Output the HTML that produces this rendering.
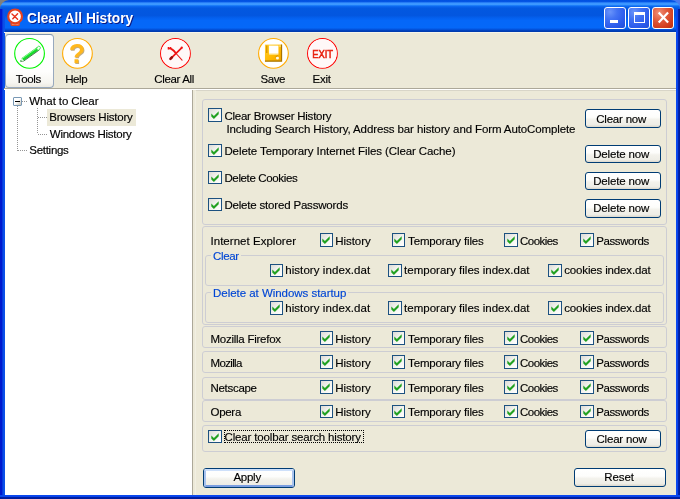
<!DOCTYPE html>
<html><head><meta charset="utf-8"><title>Clear All History</title>
<style>
html,body{margin:0;padding:0}
body{width:680px;height:499px;overflow:hidden;position:relative;background:#ECE9D8;font-family:"Liberation Sans",sans-serif;font-size:11.5px;color:#000}
div,span,svg{position:absolute;box-sizing:border-box}
.t{white-space:pre;line-height:13px;height:13px;-webkit-text-stroke:0.15px currentColor}
.title{left:0;top:0;width:680px;height:32px;border-radius:9px 9px 0 0;background:linear-gradient(to bottom,#0050E0 0%,#0656E6 6%,#3A94FF 9%,#3D98FF 14%,#1C7EFA 17%,#0862EC 21%,#0358E0 27%,#0356DF 48%,#0460EE 56%,#0567F8 64%,#0568F8 86%,#0458E4 91%,#0042C0 95%,#0038A8 100%)}
.bl{left:0;top:9px;width:5px;height:490px;background:linear-gradient(to right,#0019CF 0,#0019CF 2px,#0A4CE6 2.8px,#0B52EA 5px)}
.br{left:676px;top:9px;width:4px;height:490px;background:linear-gradient(to right,#0B4AF0 0,#0A44EA 1.8px,#001FA4 2.6px,#001A98 4px)}
.bb{left:0;top:495px;width:680px;height:4px;background:linear-gradient(to bottom,#0B4AF0 0,#0A44EA 1.6px,#0020A8 2.3px,#001A98 4px)}
.ttext{left:27.2px;top:8px;font-family:"Liberation Sans",sans-serif;font-weight:bold;font-size:14.5px;line-height:20px;color:#fff;text-shadow:1px 1px 0 #0A1883;white-space:pre;transform-origin:0 0;transform:scaleX(0.945)}
.wb{top:7px;width:21.5px;height:22px;border:1px solid #fff;border-radius:3px;background:radial-gradient(circle at 25% 20%,#6A94FA 0,#4373F3 32%,#2C5CEC 68%,#1F4ED8 100%)}
.wbx{background:radial-gradient(circle at 30% 25%,#F09078 0,#E0583A 40%,#D23C1C 75%,#B8300F 100%)}
.cb{width:13.5px;height:13.5px;border:1.1px solid #1C5180;background:linear-gradient(135deg,#DCDCD7 0%,#F3F3EF 50%,#FFFFFF 100%)}
.gb{border:1px solid #CDCDD3;border-radius:3px;}
.btn{border:1px solid #003C74;border-radius:3px;background:linear-gradient(to bottom,#FFFFFF 0%,#FDFDFB 42%,#F3F2EC 56%,#EEEDE6 86%,#DAD6CB 100%)}
.btn .t{left:0;width:100%;text-align:center}
.lg{color:#0046D5;background:#ECE9D8;padding:0 2px}
.dot{background-image:linear-gradient(to right,#959595 50%,transparent 50%);background-size:2px 1px}
.dotv{background-image:linear-gradient(to bottom,#959595 50%,transparent 50%);background-size:1px 2px}
#w{left:0;top:0;width:680px;height:499px;will-change:transform}
</style></head><body><div id="w">

<div style="left:0;top:0;width:10px;height:10px;background:#807F7C"></div><div style="left:670px;top:0;width:10px;height:10px;background:#4C7AF0"></div>
<div class="title"></div>
<div class="bl"></div><div class="br"></div><div class="bb"></div>
<svg style="left:6px;top:8px" width="18" height="20" viewBox="0 0 18 20">
<rect x="4.4" y="14.2" width="9.6" height="3.8" rx="1.4" fill="#E54A26"/>
<rect x="5.8" y="15.3" width="6.8" height="1.3" rx="0.6" fill="#F6B8A6"/>
<circle cx="9.1" cy="8.4" r="6.9" fill="#FFFFFF" stroke="#E5421F" stroke-width="2.2"/>
<path d="M6 6 L11.6 11.2 M11.6 5.8 L6.8 10.8" stroke="#E8301A" stroke-width="1.4" stroke-linecap="round" fill="none"/>
</svg>
<span class="ttext">Clear All History</span>
<div class="wb" style="left:604px"><div style="left:5px;top:12px;width:7.5px;height:3px;background:#fff"></div></div>
<div class="wb" style="left:628px"><div style="left:5.2px;top:3.9px;width:11.3px;height:11px;border:1.3px solid #fff;border-top-width:3px"></div></div>
<div class="wb wbx" style="left:652.2px"><svg style="left:0;top:0" width="20" height="20" viewBox="0 0 20 20"><path d="M5.7 4.6 L15.1 14.6 M15.1 4.6 L5.7 14.6" stroke="#fff" stroke-width="2.2" stroke-linecap="butt"/></svg></div>
<div style="left:4px;top:32px;width:672px;height:1px;background:#F6F4EA"></div>
<div style="left:4px;top:88px;width:672px;height:1px;background:#ACA899"></div>
<div style="left:4px;top:89px;width:672px;height:1px;background:#FFFFFF"></div>
<div style="left:5px;top:34px;width:49px;height:54px;border:1px solid #98A9BE;border-top-color:#7F95AE;border-radius:4px;background:linear-gradient(to bottom,#FFFFFF 0%,#FEFEFD 70%,#F6F5F0 92%,#ECEAE2 100%)"></div>
<svg style="left:12px;top:36px" width="36" height="34" viewBox="0 0 36 34"><g transform="translate(0.55 0)"><circle cx="17" cy="17.4" r="14.85" fill="#fff" stroke="#00F400" stroke-width="1.1"/>
<path d="M9.8 23.6 L25.6 12.4" stroke="#18DC2C" stroke-width="3.2" stroke-linecap="butt" fill="none"/>
<path d="M9.4 22.6 L25 11.5" stroke="#86FF8E" stroke-width="1" fill="none"/>
<path d="M8.2 25.5 L11.4 24.9 L26.8 13.9" stroke="#1E5A24" stroke-width="1" fill="none" opacity="0.8"/>
<path d="M7.3 25.6 L9.2 22.2 L11.6 25 Z" fill="#D4FFD6"/>
<path d="M7.3 25.6 L8.3 23.9 L9.4 25.2 Z" fill="#1A7A26"/>
<ellipse cx="26" cy="12.2" rx="1.6" ry="2.1" transform="rotate(35 26 12.2)" fill="#F6FFF6" stroke="#30E040" stroke-width="0.8"/>
</g></svg>
<svg style="left:60px;top:36px" width="36" height="34" viewBox="0 0 36 34"><g transform="translate(0.45 0)"><circle cx="17" cy="17.4" r="14.85" fill="#fff" stroke="#FFAA00" stroke-width="1.1"/>
<text x="17.3" y="27.6" text-anchor="middle" font-family="Liberation Sans, sans-serif" font-weight="bold" font-size="27" fill="#8A5A00" opacity="0.5">?</text>
<text x="16.6" y="27" text-anchor="middle" font-family="Liberation Sans, sans-serif" font-weight="bold" font-size="27" fill="#FFB81E">?</text>
</g></svg>
<svg style="left:158px;top:36px" width="36" height="34" viewBox="0 0 36 34"><g transform="translate(0.45 0)"><circle cx="17" cy="17.4" r="14.85" fill="#fff" stroke="#FF0000" stroke-width="1.1"/>
<circle cx="17" cy="17.4" r="14.2" fill="#FFF8F8"/>
<path d="M10.4 12.2 C13.6 12.4 15.4 14.4 17.2 17" stroke="#F01414" stroke-width="1.9" fill="none" stroke-linecap="round"/>
<path d="M17.2 17 L23.6 24.2" stroke="#E82020" stroke-width="1.1" fill="none" stroke-linecap="round"/>
<path d="M9.9 11 L9.9 13.4 M12.2 10.9 L12.2 12.6" stroke="#F01414" stroke-width="1.3" fill="none"/>
<path d="M23.2 11.8 L13 21.8" stroke="#F01414" stroke-width="1.7" fill="none" stroke-linecap="round"/>
<path d="M13.4 21.4 L12 22.8" stroke="#9A0A0A" stroke-width="2.6" fill="none" stroke-linecap="round"/>
<circle cx="23.3" cy="11.7" r="1.1" fill="#F01414"/>
</g></svg>
<svg style="left:256px;top:36px" width="36" height="34" viewBox="0 0 36 34"><g transform="translate(0.45 0)"><circle cx="17" cy="17.4" r="14.85" fill="#fff" stroke="#FFAA00" stroke-width="1.1"/>
<defs><linearGradient id="fg" x1="0" y1="0" x2="1" y2="1"><stop offset="0" stop-color="#FFD030"/><stop offset="0.6" stop-color="#FFB800"/><stop offset="1" stop-color="#F0A000"/></linearGradient></defs>
<rect x="8.5" y="8.6" width="16.6" height="16.6" fill="url(#fg)"/>
<path d="M8.5 25.2 H25.1 V8.6" stroke="#A87400" stroke-width="1.2" fill="none"/>
<path d="M10.3 9.4 V17" stroke="#D89400" stroke-width="1.4"/>
<rect x="12.6" y="9.6" width="9.4" height="8.2" fill="#FFFFFF"/>
<path d="M12.6 18.3 H22" stroke="#FFE58A" stroke-width="1"/>
<circle cx="21" cy="22" r="1.5" fill="#FFFBEA"/>
<path d="M19.2 21.2 A2 2 0 0 1 21.6 19.9" stroke="#C88C00" stroke-width="0.9" fill="none"/>
<rect x="22.9" y="9.4" width="1.3" height="1.3" fill="#FFE9A0"/>
</g></svg>
<svg style="left:305px;top:36px" width="36" height="34" viewBox="0 0 36 34"><g transform="translate(0.45 0)"><circle cx="17" cy="17.4" r="14.85" fill="#fff" stroke="#FF0000" stroke-width="1.1"/>
<circle cx="17" cy="17.4" r="14.2" fill="#FFF8F8"/>
<text x="17.2" y="22" text-anchor="middle" font-family="Liberation Sans, sans-serif" font-size="11" fill="#E8200E" stroke="#E8200E" stroke-width="0.55" textLength="21" lengthAdjust="spacingAndGlyphs">EXIT</text>
</g></svg>
<span class="t" style="left:15.8px;top:72.7px;letter-spacing:-0.352px;">Tools</span>
<span class="t" style="left:65.2px;top:72.7px;letter-spacing:-0.439px;">Help</span>
<span class="t" style="left:154.3px;top:72.7px;letter-spacing:-0.359px;">Clear All</span>
<span class="t" style="left:260.4px;top:72.7px;letter-spacing:-0.405px;">Save</span>
<span class="t" style="left:312.5px;top:72.7px;letter-spacing:-0.243px;">Exit</span>
<div style="left:5px;top:90px;width:188px;height:405px;background:#fff;border-right:1px solid #ACA899"></div>
<div style="left:196px;top:90px;width:480px;height:1px;background:#D8D5C8"></div>
<div style="left:195px;top:91px;width:1px;height:404px;background:#F1EFE3"></div>
<div class="dotv" style="left:17px;top:106px;width:1px;height:45px"></div>
<div class="dot" style="left:18px;top:150px;width:9px;height:1px"></div>
<div class="dot" style="left:22px;top:101px;width:6px;height:1px"></div>
<div class="dotv" style="left:37px;top:108px;width:1px;height:26px"></div>
<div class="dot" style="left:38px;top:117px;width:9px;height:1px"></div>
<div class="dot" style="left:38px;top:134px;width:9px;height:1px"></div>
<div style="left:13px;top:97px;width:9px;height:9px;border:1px solid #7898B5;border-radius:1px;background:linear-gradient(135deg,#fff 0%,#fff 45%,#C7C2B4 100%)"><div style="left:1px;top:3px;width:5px;height:1px;background:#000"></div></div>
<div style="left:47px;top:109px;width:89px;height:17px;background:#ECE9D8"></div>
<span class="t " style="left:29.3px;top:94.6px;letter-spacing:-0.093px;">What to Clear</span>
<span class="t " style="left:49.2px;top:111.0px;letter-spacing:-0.219px;">Browsers History</span>
<span class="t " style="left:49.8px;top:127.6px;letter-spacing:-0.263px;">Windows History</span>
<span class="t " style="left:29.3px;top:144.1px;letter-spacing:-0.283px;">Settings</span>
<div class="gb" style="left:202px;top:99.00px;width:465px;height:126.00px;"></div>
<div class="cb" style="left:208px;top:108px;width:14px;height:14px"><svg style="left:1.85px;top:2.05px" width="9" height="9" viewBox="0 0 9 9"><path d="M0.3 2.4 L0.3 5.4 L2.9 8 L7.7 3.2 L7.7 0.2 L2.9 5 Z" fill="#21A121"/></svg></div>
<span class="t " style="left:224.4px;top:110.1px;letter-spacing:-0.230px;">Clear Browser History</span>
<span class="t " style="left:226.4px;top:123.2px;letter-spacing:-0.111px;">Including Search History, Address bar history and Form AutoComplete</span>
<div class="cb" style="left:208px;top:144px;width:14px;height:13px"><svg style="left:1.85px;top:1.55px" width="9" height="9" viewBox="0 0 9 9"><path d="M0.3 2.4 L0.3 5.4 L2.9 8 L7.7 3.2 L7.7 0.2 L2.9 5 Z" fill="#21A121"/></svg></div>
<span class="t " style="left:224.4px;top:145.1px;letter-spacing:-0.089px;">Delete Temporary Internet Files (Clear Cache)</span>
<div class="cb" style="left:208px;top:171px;width:14px;height:13px"><svg style="left:1.85px;top:1.55px" width="9" height="9" viewBox="0 0 9 9"><path d="M0.3 2.4 L0.3 5.4 L2.9 8 L7.7 3.2 L7.7 0.2 L2.9 5 Z" fill="#21A121"/></svg></div>
<span class="t " style="left:224.4px;top:172.1px;letter-spacing:-0.356px;">Delete Cookies</span>
<div class="cb" style="left:208px;top:198px;width:14px;height:13px"><svg style="left:1.85px;top:1.55px" width="9" height="9" viewBox="0 0 9 9"><path d="M0.3 2.4 L0.3 5.4 L2.9 8 L7.7 3.2 L7.7 0.2 L2.9 5 Z" fill="#21A121"/></svg></div>
<span class="t " style="left:224.4px;top:199.1px;letter-spacing:-0.185px;">Delete stored Passwords</span>
<div class="btn" style="left:585px;top:109px;width:76px;height:19px"></div>
<span class="t" style="left:596.2px;top:112.9px;letter-spacing:-0.198px;">Clear now</span>
<div class="btn" style="left:585px;top:145px;width:76px;height:18px"></div>
<span class="t" style="left:593.2px;top:147.9px;letter-spacing:-0.155px;">Delete now</span>
<div class="btn" style="left:585px;top:172px;width:76px;height:18px"></div>
<span class="t" style="left:593.2px;top:175.0px;letter-spacing:-0.155px;">Delete now</span>
<div class="btn" style="left:585px;top:199px;width:76px;height:18.5px"></div>
<span class="t" style="left:593.2px;top:202.1px;letter-spacing:-0.155px;">Delete now</span>
<div class="gb" style="left:202px;top:226.00px;width:465px;height:98.90px;"></div>
<span class="t " style="left:210.5px;top:235.0px;letter-spacing:0.028px;">Internet Explorer</span>
<div class="cb" style="left:320px;top:233px;width:13px;height:14px"><svg style="left:1.35px;top:2.05px" width="9" height="9" viewBox="0 0 9 9"><path d="M0.3 2.4 L0.3 5.4 L2.9 8 L7.7 3.2 L7.7 0.2 L2.9 5 Z" fill="#21A121"/></svg></div>
<span class="t " style="left:335.2px;top:235.0px;letter-spacing:-0.040px;">History</span>
<div class="cb" style="left:392px;top:233px;width:13px;height:14px"><svg style="left:1.35px;top:2.05px" width="9" height="9" viewBox="0 0 9 9"><path d="M0.3 2.4 L0.3 5.4 L2.9 8 L7.7 3.2 L7.7 0.2 L2.9 5 Z" fill="#21A121"/></svg></div>
<span class="t " style="left:408.1px;top:235.0px;letter-spacing:-0.165px;">Temporary files</span>
<div class="cb" style="left:504px;top:233px;width:14px;height:14px"><svg style="left:1.85px;top:2.05px" width="9" height="9" viewBox="0 0 9 9"><path d="M0.3 2.4 L0.3 5.4 L2.9 8 L7.7 3.2 L7.7 0.2 L2.9 5 Z" fill="#21A121"/></svg></div>
<span class="t " style="left:520.1px;top:235.0px;letter-spacing:-0.566px;">Cookies</span>
<div class="cb" style="left:580px;top:233px;width:14px;height:14px"><svg style="left:1.85px;top:2.05px" width="9" height="9" viewBox="0 0 9 9"><path d="M0.3 2.4 L0.3 5.4 L2.9 8 L7.7 3.2 L7.7 0.2 L2.9 5 Z" fill="#21A121"/></svg></div>
<span class="t " style="left:596.3px;top:235.0px;letter-spacing:-0.417px;">Passwords</span>
<div class="gb" style="left:205px;top:255.10px;width:459px;height:31.00px;"></div>
<span class="t lg" style="left:211.1px;top:249.9px;letter-spacing:-0.397px;">Clear</span>
<div class="cb" style="left:270px;top:264px;width:13px;height:13px"><svg style="left:1.35px;top:1.55px" width="9" height="9" viewBox="0 0 9 9"><path d="M0.3 2.4 L0.3 5.4 L2.9 8 L7.7 3.2 L7.7 0.2 L2.9 5 Z" fill="#21A121"/></svg></div>
<span class="t " style="left:285.2px;top:264.3px;letter-spacing:0.074px;">history index.dat</span>
<div class="cb" style="left:388px;top:264px;width:14px;height:13px"><svg style="left:1.85px;top:1.55px" width="9" height="9" viewBox="0 0 9 9"><path d="M0.3 2.4 L0.3 5.4 L2.9 8 L7.7 3.2 L7.7 0.2 L2.9 5 Z" fill="#21A121"/></svg></div>
<span class="t " style="left:404.1px;top:264.3px;letter-spacing:0.004px;">temporary files index.dat</span>
<div class="cb" style="left:548px;top:264px;width:14px;height:13px"><svg style="left:1.85px;top:1.55px" width="9" height="9" viewBox="0 0 9 9"><path d="M0.3 2.4 L0.3 5.4 L2.9 8 L7.7 3.2 L7.7 0.2 L2.9 5 Z" fill="#21A121"/></svg></div>
<span class="t " style="left:564.2px;top:264.3px;letter-spacing:-0.146px;">cookies index.dat</span>
<div class="gb" style="left:205px;top:292.00px;width:459px;height:30.90px;"></div>
<span class="t lg" style="left:211.1px;top:286.7px;letter-spacing:-0.041px;">Delete at Windows startup</span>
<div class="cb" style="left:270px;top:301px;width:13px;height:14px"><svg style="left:1.35px;top:2.05px" width="9" height="9" viewBox="0 0 9 9"><path d="M0.3 2.4 L0.3 5.4 L2.9 8 L7.7 3.2 L7.7 0.2 L2.9 5 Z" fill="#21A121"/></svg></div>
<span class="t " style="left:285.2px;top:301.9px;letter-spacing:0.074px;">history index.dat</span>
<div class="cb" style="left:388px;top:301px;width:14px;height:14px"><svg style="left:1.85px;top:2.05px" width="9" height="9" viewBox="0 0 9 9"><path d="M0.3 2.4 L0.3 5.4 L2.9 8 L7.7 3.2 L7.7 0.2 L2.9 5 Z" fill="#21A121"/></svg></div>
<span class="t " style="left:404.1px;top:301.9px;letter-spacing:0.004px;">temporary files index.dat</span>
<div class="cb" style="left:548px;top:301px;width:14px;height:14px"><svg style="left:1.85px;top:2.05px" width="9" height="9" viewBox="0 0 9 9"><path d="M0.3 2.4 L0.3 5.4 L2.9 8 L7.7 3.2 L7.7 0.2 L2.9 5 Z" fill="#21A121"/></svg></div>
<span class="t " style="left:564.2px;top:301.9px;letter-spacing:-0.146px;">cookies index.dat</span>
<div class="gb" style="left:202px;top:326.10px;width:465px;height:22.40px;"></div>
<span class="t " style="left:210.5px;top:332.7px;letter-spacing:-0.256px;">Mozilla Firefox</span>
<div class="cb" style="left:320px;top:331px;width:13px;height:14px"><svg style="left:1.35px;top:2.05px" width="9" height="9" viewBox="0 0 9 9"><path d="M0.3 2.4 L0.3 5.4 L2.9 8 L7.7 3.2 L7.7 0.2 L2.9 5 Z" fill="#21A121"/></svg></div>
<span class="t " style="left:335.2px;top:332.7px;letter-spacing:-0.040px;">History</span>
<div class="cb" style="left:392px;top:331px;width:13px;height:14px"><svg style="left:1.35px;top:2.05px" width="9" height="9" viewBox="0 0 9 9"><path d="M0.3 2.4 L0.3 5.4 L2.9 8 L7.7 3.2 L7.7 0.2 L2.9 5 Z" fill="#21A121"/></svg></div>
<span class="t " style="left:408.1px;top:332.7px;letter-spacing:-0.165px;">Temporary files</span>
<div class="cb" style="left:504px;top:331px;width:14px;height:14px"><svg style="left:1.85px;top:2.05px" width="9" height="9" viewBox="0 0 9 9"><path d="M0.3 2.4 L0.3 5.4 L2.9 8 L7.7 3.2 L7.7 0.2 L2.9 5 Z" fill="#21A121"/></svg></div>
<span class="t " style="left:520.1px;top:332.7px;letter-spacing:-0.566px;">Cookies</span>
<div class="cb" style="left:580px;top:331px;width:14px;height:14px"><svg style="left:1.85px;top:2.05px" width="9" height="9" viewBox="0 0 9 9"><path d="M0.3 2.4 L0.3 5.4 L2.9 8 L7.7 3.2 L7.7 0.2 L2.9 5 Z" fill="#21A121"/></svg></div>
<span class="t " style="left:596.3px;top:332.7px;letter-spacing:-0.417px;">Passwords</span>
<div class="gb" style="left:202px;top:351.10px;width:465px;height:22.40px;"></div>
<span class="t " style="left:210.5px;top:356.7px;letter-spacing:-0.657px;">Mozilla</span>
<div class="cb" style="left:320px;top:355px;width:13px;height:14px"><svg style="left:1.35px;top:2.05px" width="9" height="9" viewBox="0 0 9 9"><path d="M0.3 2.4 L0.3 5.4 L2.9 8 L7.7 3.2 L7.7 0.2 L2.9 5 Z" fill="#21A121"/></svg></div>
<span class="t " style="left:335.2px;top:356.7px;letter-spacing:-0.040px;">History</span>
<div class="cb" style="left:392px;top:355px;width:13px;height:14px"><svg style="left:1.35px;top:2.05px" width="9" height="9" viewBox="0 0 9 9"><path d="M0.3 2.4 L0.3 5.4 L2.9 8 L7.7 3.2 L7.7 0.2 L2.9 5 Z" fill="#21A121"/></svg></div>
<span class="t " style="left:408.1px;top:356.7px;letter-spacing:-0.165px;">Temporary files</span>
<div class="cb" style="left:504px;top:355px;width:14px;height:14px"><svg style="left:1.85px;top:2.05px" width="9" height="9" viewBox="0 0 9 9"><path d="M0.3 2.4 L0.3 5.4 L2.9 8 L7.7 3.2 L7.7 0.2 L2.9 5 Z" fill="#21A121"/></svg></div>
<span class="t " style="left:520.1px;top:356.7px;letter-spacing:-0.566px;">Cookies</span>
<div class="cb" style="left:580px;top:355px;width:14px;height:14px"><svg style="left:1.85px;top:2.05px" width="9" height="9" viewBox="0 0 9 9"><path d="M0.3 2.4 L0.3 5.4 L2.9 8 L7.7 3.2 L7.7 0.2 L2.9 5 Z" fill="#21A121"/></svg></div>
<span class="t " style="left:596.3px;top:356.7px;letter-spacing:-0.417px;">Passwords</span>
<div class="gb" style="left:202px;top:377.10px;width:465px;height:22.60px;"></div>
<span class="t " style="left:210.5px;top:381.6px;letter-spacing:-0.299px;">Netscape</span>
<div class="cb" style="left:320px;top:380px;width:13px;height:14px"><svg style="left:1.35px;top:2.05px" width="9" height="9" viewBox="0 0 9 9"><path d="M0.3 2.4 L0.3 5.4 L2.9 8 L7.7 3.2 L7.7 0.2 L2.9 5 Z" fill="#21A121"/></svg></div>
<span class="t " style="left:335.2px;top:381.6px;letter-spacing:-0.040px;">History</span>
<div class="cb" style="left:392px;top:380px;width:13px;height:14px"><svg style="left:1.35px;top:2.05px" width="9" height="9" viewBox="0 0 9 9"><path d="M0.3 2.4 L0.3 5.4 L2.9 8 L7.7 3.2 L7.7 0.2 L2.9 5 Z" fill="#21A121"/></svg></div>
<span class="t " style="left:408.1px;top:381.6px;letter-spacing:-0.165px;">Temporary files</span>
<div class="cb" style="left:504px;top:380px;width:14px;height:14px"><svg style="left:1.85px;top:2.05px" width="9" height="9" viewBox="0 0 9 9"><path d="M0.3 2.4 L0.3 5.4 L2.9 8 L7.7 3.2 L7.7 0.2 L2.9 5 Z" fill="#21A121"/></svg></div>
<span class="t " style="left:520.1px;top:381.6px;letter-spacing:-0.566px;">Cookies</span>
<div class="cb" style="left:580px;top:380px;width:14px;height:14px"><svg style="left:1.85px;top:2.05px" width="9" height="9" viewBox="0 0 9 9"><path d="M0.3 2.4 L0.3 5.4 L2.9 8 L7.7 3.2 L7.7 0.2 L2.9 5 Z" fill="#21A121"/></svg></div>
<span class="t " style="left:596.3px;top:381.6px;letter-spacing:-0.417px;">Passwords</span>
<div class="gb" style="left:202px;top:400.40px;width:465px;height:21.90px;"></div>
<span class="t " style="left:210.5px;top:405.7px;letter-spacing:-0.294px;">Opera</span>
<div class="cb" style="left:320px;top:405px;width:13px;height:13px"><svg style="left:1.35px;top:1.55px" width="9" height="9" viewBox="0 0 9 9"><path d="M0.3 2.4 L0.3 5.4 L2.9 8 L7.7 3.2 L7.7 0.2 L2.9 5 Z" fill="#21A121"/></svg></div>
<span class="t " style="left:335.2px;top:405.7px;letter-spacing:-0.040px;">History</span>
<div class="cb" style="left:392px;top:405px;width:13px;height:13px"><svg style="left:1.35px;top:1.55px" width="9" height="9" viewBox="0 0 9 9"><path d="M0.3 2.4 L0.3 5.4 L2.9 8 L7.7 3.2 L7.7 0.2 L2.9 5 Z" fill="#21A121"/></svg></div>
<span class="t " style="left:408.1px;top:405.7px;letter-spacing:-0.165px;">Temporary files</span>
<div class="cb" style="left:504px;top:405px;width:14px;height:13px"><svg style="left:1.85px;top:1.55px" width="9" height="9" viewBox="0 0 9 9"><path d="M0.3 2.4 L0.3 5.4 L2.9 8 L7.7 3.2 L7.7 0.2 L2.9 5 Z" fill="#21A121"/></svg></div>
<span class="t " style="left:520.1px;top:405.7px;letter-spacing:-0.566px;">Cookies</span>
<div class="cb" style="left:580px;top:405px;width:14px;height:13px"><svg style="left:1.85px;top:1.55px" width="9" height="9" viewBox="0 0 9 9"><path d="M0.3 2.4 L0.3 5.4 L2.9 8 L7.7 3.2 L7.7 0.2 L2.9 5 Z" fill="#21A121"/></svg></div>
<span class="t " style="left:596.3px;top:405.7px;letter-spacing:-0.417px;">Passwords</span>
<div class="gb" style="left:202px;top:424.50px;width:465px;height:27.80px;"></div>
<div class="cb" style="left:208px;top:430px;width:14px;height:13px"><svg style="left:1.85px;top:1.55px" width="9" height="9" viewBox="0 0 9 9"><path d="M0.3 2.4 L0.3 5.4 L2.9 8 L7.7 3.2 L7.7 0.2 L2.9 5 Z" fill="#21A121"/></svg></div>
<span class="t " style="left:224.5px;top:431.2px;letter-spacing:-0.154px;">Clear toolbar search history</span>
<div style="left:223.5px;top:429.8px;width:140px;height:13.4px;border:1px dotted #000"></div>
<div class="btn" style="left:585px;top:430px;width:76px;height:18px"></div>
<span class="t" style="left:596.5px;top:433.1px;letter-spacing:-0.198px;">Clear now</span>
<div class="btn" style="left:203px;top:468px;width:92px;height:19.5px"><div style="left:0;top:0;width:90px;height:17.5px;border:2px solid #A9C3EE;border-top-color:#CEE0FA;border-bottom-color:#7B9EE0;border-radius:2px"></div></div>
<span class="t" style="left:233.4px;top:471.3px;letter-spacing:-0.256px;">Apply</span>
<div class="btn" style="left:574px;top:468px;width:92px;height:19px"></div>
<span class="t" style="left:604.2px;top:471.3px;letter-spacing:-0.049px;">Reset</span>
</div></body></html>
